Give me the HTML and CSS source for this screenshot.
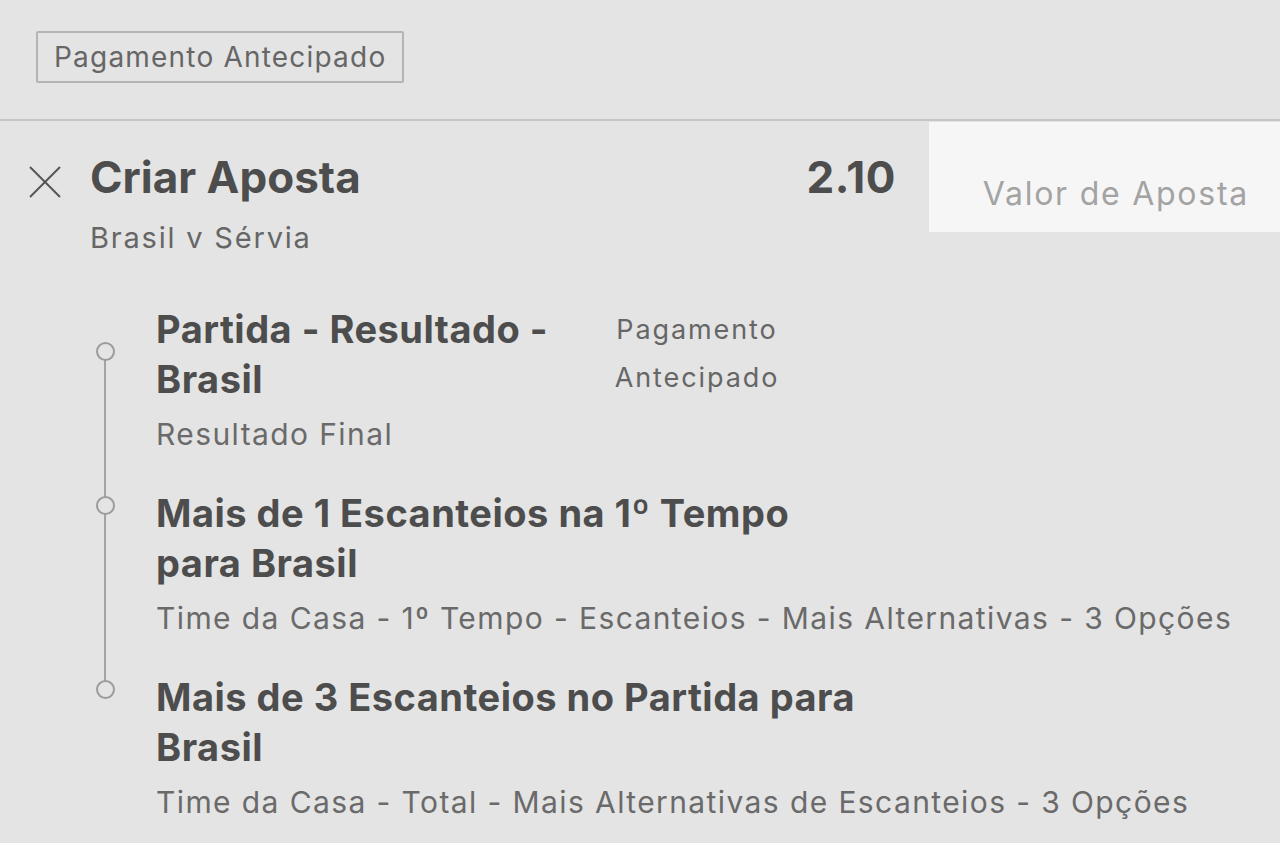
FILE: index.html
```html
<!DOCTYPE html>
<html lang="pt-BR">
<head>
  <meta charset="UTF-8">
  <title>Criar Aposta</title>
  <link rel="stylesheet" href="styles.css">
</head>
<body>
  <!-- faixa de cima com a etiqueta -->
  <div class="top-bar">
    <span class="tag-box">Pagamento Antecipado</span>
  </div>

  <!-- cabeçalho da aposta -->
  <div class="slip-head">
    <button class="close-btn" aria-label="Fechar">
      <svg width="32" height="32" viewBox="0 0 32 32">
        <line x1="1" y1="1" x2="31" y2="31" />
        <line x1="31" y1="1" x2="1" y2="31" />
      </svg>
    </button>
    <div class="head-text">
      <div class="slip-title">Criar Aposta</div>
      <div class="slip-match">Brasil v Sérvia</div>
    </div>
    <div class="slip-odds">2.10</div>
    <div class="stake-input">Valor de Aposta</div>
  </div>

  <!-- seleções -->
  <div class="legs">
    <div class="leg leg-first">
      <div class="rail"><span class="dot"></span></div>
      <div class="leg-body">
        <div class="leg-row">
          <div class="leg-title">Partida - Resultado - Brasil</div>
          <div class="leg-tag">Pagamento Antecipado</div>
        </div>
        <div class="leg-desc">Resultado Final</div>
      </div>
    </div>

    <div class="leg">
      <div class="rail"><span class="dot"></span></div>
      <div class="leg-body">
        <div class="leg-row">
          <div class="leg-title">Mais de 1 Escanteios na 1º Tempo para Brasil</div>
        </div>
        <div class="leg-desc">Time da Casa - 1º Tempo - Escanteios - Mais Alternativas - 3 Opções</div>
      </div>
    </div>

    <div class="leg leg-last">
      <div class="rail"><span class="dot"></span></div>
      <div class="leg-body">
        <div class="leg-row">
          <div class="leg-title">Mais de 3 Escanteios no Partida para Brasil</div>
        </div>
        <div class="leg-desc">Time da Casa - Total - Mais Alternativas de Escanteios - 3 Opções</div>
      </div>
    </div>
  </div>
</body>
</html>
```

FILE: styles.css
```css
body {
  margin: 0;
  background: #e4e4e4;
  font-family: Inter, "Noto Sans", sans-serif;
  color: #4d4d4d;
  overflow: hidden;
}

/* faixa de cima */
.top-bar {
  height: 121px;
  box-sizing: border-box;
  padding: 31px 0 0 36px;
  border-bottom: 2px solid #c5c5c5;
}
.tag-box {
  display: inline-block;
  box-sizing: border-box;
  width: 368px;
  height: 52px;
  padding-left: 16px;
  border: 2px solid #b4b4b4;
  border-radius: 2px;
  font-size: 28px;
  line-height: 48px;
  letter-spacing: 1.2px;
  color: #666;
}

/* cabeçalho */
.slip-head {
  display: flex;
  align-items: flex-start;
  padding-left: 29px;
}
.close-btn {
  background: none;
  border: 0;
  padding: 0;
  margin: 45px 29px 0 0;
  width: 32px;
  height: 32px;
}
.close-btn svg line {
  stroke: #555;
  stroke-width: 2;
}
.head-text {
  flex: 1;
  padding-top: 32px;
}
.slip-title {
  font-size: 44px;
  font-weight: 700;
  line-height: 48px;
}
.slip-match {
  margin-top: 17px;
  font-size: 29px;
  line-height: 40px;
  letter-spacing: 1.8px;
  color: #666;
}
.slip-odds {
  padding-top: 32px;
  margin-right: 33px;
  font-size: 44px;
  font-weight: 700;
  line-height: 48px;
  letter-spacing: 0.6px;
}
.stake-input {
  box-sizing: border-box;
  width: 351px;
  height: 110px;
  margin-top: 1px;
  padding: 52px 31px 0 0;
  background: #f6f6f6;
  text-align: right;
  font-size: 32px;
  line-height: 40px;
  letter-spacing: 1.75px;
  color: #a3a3a3;
}

/* seleções com a linha do tempo */
.legs {
  padding: 46px 0 20px 96px;
}
.leg {
  display: flex;
  gap: 41px;
  margin-bottom: 34px;
}
.rail {
  position: relative;
  width: 19px;
  flex: none;
}
.rail::before {
  content: "";
  position: absolute;
  left: 8px;
  top: 0;
  bottom: -34px;
  width: 2px;
  background: #a2a2a2;
}
.dot {
  display: block;
  box-sizing: border-box;
  width: 19px;
  height: 19px;
  margin-top: 8px;
  border: 2px solid #9c9c9c;
  border-radius: 50%;
  background: #e4e4e4;
  position: relative;
}
.leg-first .dot { margin-top: 38px; }
.leg-first .rail::before { top: 46px; }
.leg-last .rail::before { bottom: auto; height: 17px; }

.leg-body {
  flex: 1;
}
.leg-row {
  display: flex;
  width: 712px;
}
.leg-title {
  flex: 1;
  font-size: 38px;
  font-weight: 700;
  line-height: 50px;
  letter-spacing: 0.5px;
}
.leg-first .leg-title {
  flex: none;
  width: 430px;
}
.leg-tag {
  width: 210px;
  margin-left: 6px;
  padding-top: 2px;
  text-align: center;
  font-size: 27px;
  line-height: 48px;
  letter-spacing: 1.9px;
  color: #666;
}
.leg-desc {
  margin-top: 10px;
  font-size: 30px;
  line-height: 40px;
  letter-spacing: 1.4px;
  color: #6a6a6a;
}
```
